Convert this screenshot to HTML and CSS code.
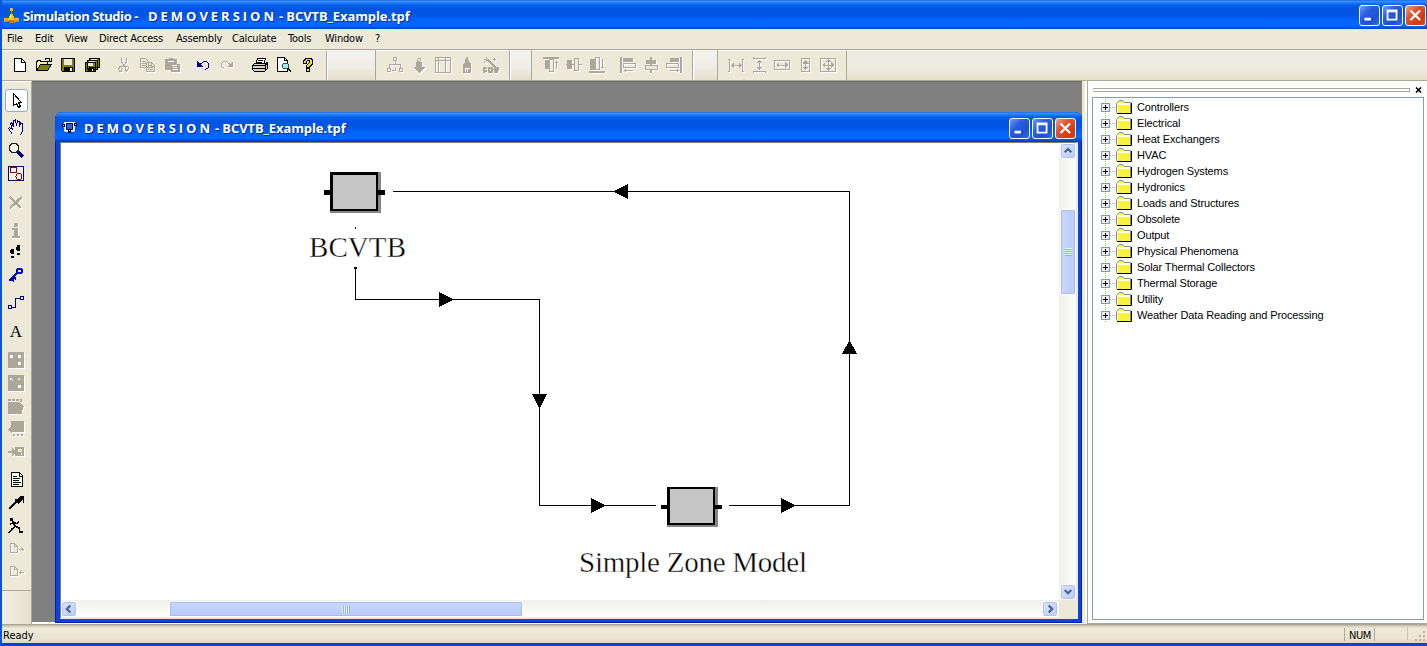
FILE: index.html
```html
<!DOCTYPE html>
<html lang="en">
<head>
<meta charset="utf-8">
<title>Simulation Studio</title>
<link rel="stylesheet" href="styles.css">
</head>
<body>
<svg class="defs" width="0" height="0">
  <defs>
    <symbol id="min" viewBox="0 0 21 21"><path d="M5 13h7v3H5z" fill="#fff"/></symbol>
    <symbol id="max" viewBox="0 0 21 21"><path d="M4 4h12v12H4zM6 7v7h8V7z" fill="#fff" fill-rule="evenodd"/></symbol>
    <symbol id="cls" viewBox="0 0 21 21"><path d="M5 5l10.500 10.500M15.500 5L5 15.500" stroke="#fff" stroke-width="2.500"/></symbol>
    <symbol id="folder" viewBox="0 0 16 14">
      <path d="M1 4h14v9H1z" fill="#f4f43c"/><path d="M2 3l1-2h4l1 2z" fill="#f4f43c"/>
      <path d="M.5 12.500v-9l2-2.500 1-.5h3l2 2h6v10" fill="none" stroke="#87877c"/>
      <path d="M1.500 12V4.500H14" fill="none" stroke="#fffff0"/>
      <path d="M1 13.500h14.500V3" fill="none" stroke="#000"/>
    </symbol>
    <symbol id="plus" viewBox="0 0 9 9"><rect x=".5" y=".5" width="8" height="8" fill="#f0eee6" stroke="#7898b5"/><path d="M2 4.500h5M4.500 2v5" stroke="#000"/></symbol>
  </defs>
</svg>
<div class="app">
  <header class="titlebar">
    <svg class="logo" width="16" height="16" viewBox="0 0 16 16"><path d="M7 2h1v4H7z" fill="#8c8a30"/><path d="M6 0h3v3H6z" fill="#ffb400"/><path d="M6 6h3v2h1v2h1v3H4v-3h1V8h1z" fill="#ffc020"/><path d="M0 10h4v4H0zM11 10h4v4h-4z" fill="#f0a000"/><path d="M5 12h6v3H5zM1 13h3v1H1zM12 13h3v1h-3z" fill="#d07800"/><path d="M6 7h1v3H6zM1 10h1v1H1zM12 10h1v1h-1z" fill="#fff060"/></svg>
    <span class="t t-app">Simulation Studio -</span><span class="t t-demo">D E M O V E R S I O N</span><span class="t t-file">- BCVTB_Example.tpf</span>
    <div class="winbtns">
      <svg class="wb"><use href="#min"/></svg><svg class="wb"><use href="#max"/></svg><svg class="wb close"><use href="#cls"/></svg>
    </div>
  </header>
  <nav class="menu"><span>File</span><span>Edit</span><span>View</span><span>Direct Access</span><span>Assembly</span><span>Calculate</span><span>Tools</span><span>Window</span><span>?</span></nav>
  <div class="toolbar">
    <div class="band b1">
      <svg class="i" viewBox="0 0 16 16"><path d="M2.500 1.500h7l4 4v9h-11z" fill="#fff" stroke="#000"/><path d="M9.500 1.500v4h4" fill="none" stroke="#000"/></svg>
      <svg class="i" viewBox="0 0 16 16"><path d="M.5 13.500v-9h1v-1h3v1h7v3" fill="#ffff80" stroke="#000"/><path d="M.5 13.500l4-6h11l-4 6z" fill="#808000" stroke="#000"/><path d="M9 2.500l1-1h3l1 2M15 1v3h-3" fill="none" stroke="#000"/></svg>
      <svg class="i" viewBox="0 0 16 16"><path d="M1.500 1.500h13v13h-12l-1-1z" fill="#808000" stroke="#000"/><path d="M4 2h8v6H4z" fill="#ece9d8"/><path d="M4 10h9v4H4z" fill="#000"/><path d="M10 11h2v3h-2z" fill="#ece9d8"/></svg>
      <svg class="i" viewBox="0 0 16 16"><path d="M5.500 1.500h10v9h-10zM3.500 3.500h10v9h-10zM1.500 5.500h10v9h-10z" fill="#808000" stroke="#000"/><path d="M4 6h5v3H4zM7 2h6v1H7zM5 4h6v1H5z" fill="#ece9d8"/><path d="M4 11h6v3H4z"/><path d="M8 12h1v2H8z" fill="#fff"/></svg>
      <svg class="i dis g8" viewBox="0 0 16 16"><path d="M5.500 1v4l4 5M10.500 1v4l-4 5" fill="none" stroke="#aca899"/><path d="M5 9.500c-3 0-2.500 5-.5 5s2-5 .5-5zM11 9.500c-2 0-2.500 5-.5 4.500s2.500-4.500.5-4.500z" fill="none" stroke="#aca899"/></svg>
      <svg class="i dis" viewBox="0 0 16 16"><path d="M.5 1.500h5l3 3v6h-8zM6.500 5.500h5l3 3v6h-8z" fill="#ece9d8" stroke="#aca899"/><path d="M2 4.500h4M2 6.500h4M2 8.500h4M8 8.500h3M8 10.500h5M8 12.500h5M11.500 5v4h3" fill="none" stroke="#aca899"/></svg>
      <svg class="i dis" viewBox="0 0 16 16"><path d="M1 2h4V1h4v1h4v5h3v8H7v-2H1z" fill="#aca899"/><path d="M4 4h6v1H4zM8 8h5v1H8zM9 10h4v1H9zM9 12h5v1H9z" fill="#fff"/></svg>
      <svg class="i g7" viewBox="0 0 16 16"><path d="M2 10h6L2 4z" fill="#000080"/><path d="M5 7.500l3.500-3h3l2 2v4l-3 2" fill="none" stroke="#000080"/></svg>
      <svg class="i dis" viewBox="0 0 16 16"><path d="M14 10H8l6-6z" fill="#aca899"/><path d="M11 7.500l-3.500-3h-3l-2 2v3l3 2" fill="none" stroke="#aca899"/></svg>
      <svg class="i g9" viewBox="0 0 16 16"><path d="M3.500 7.500l2-6h8l-2 6z" fill="#fff" stroke="#000"/><path d="M.5 8.500l2-2h11l2-1v6l-3 3h-10l-2-2z" fill="#d8d5c5" stroke="#000"/><path d="M1 8.500h12v5M13 8.500l2-2M1 11.500h12M6 3.500h5M5 5.500h5" fill="none" stroke="#000"/><path d="M8 10h2v1H8z" fill="#ee0"/></svg>
      <svg class="i" viewBox="0 0 16 16"><path d="M1.500.5h7l3 3v11h-10z" fill="#fff" stroke="#000"/><path d="M8.500.5v3h3" fill="none" stroke="#000"/><circle cx="9.500" cy="9" r="3" fill="#9ee" stroke="#444"/><path d="M12 11.500l3 3" stroke="#000" stroke-width="2"/></svg>
      <svg class="i" viewBox="0 0 16 16"><path d="M3 3l2-2h6l2 2v4l-3 3v1H6V8l3-2V4H7v3H3zM6 11h4v4H6z" fill="#000"/><path d="M4 4l2-2h4l2 2v2L9 9v1H7V8l3-2V4L9 3H7L6 4v2H4zM7 12h2v2H7z" fill="#f4e900"/></svg>
    </div>
    <div class="gap w48"></div>
    <div class="band b2">
      <svg class="i dis" viewBox="0 0 16 16"><g fill="none" stroke="#aca899"><path d="M6.500.5h3v3h-3zM.5 11.500h3v3h-3zM12.500 11.500h3v3h-3zM8 4v4M2.500 11V7.500h11V11M5 13.500h3v-3"/></g></svg>
      <svg class="i dis" viewBox="0 0 16 16"><path d="M5 5h6v5h3l-6 6-6-6h3z" fill="#aca899"/><circle cx="8" cy="3" r="1.500" fill="none" stroke="#aca899"/></svg>
      <svg class="i dis" viewBox="0 0 16 16"><path d="M.5.500h15v15H.5zM1 3.500h15M3.500 1v15M10.500 1v15" fill="none" stroke="#aca899"/></svg>
      <svg class="i dis" viewBox="0 0 16 16"><path d="M7 0h2l1 5 2 2v9H4V7l2-2z" fill="#aca899"/><path d="M6 11h5v1H6zM6 12h1v3H6zM8 12h1v3H8z" fill="#fff"/></svg>
      <svg class="i dis" viewBox="0 0 16 16"><path d="M3.500 0v5M1 2.500h5M11.500 1v3M10 2.500h3M5 3l8 8M1.500 4v2" stroke="#aca899" stroke-width="1.500"/><path d="M1 16v-5h3M1 13.500h3M6 11h3v4H6zM12 16v-5h3v2h-3l3 3" fill="none" stroke="#aca899" stroke-width="2"/></svg>
    </div>
    <div class="gap w22"></div>
    <div class="band b3">
      <svg class="i dis" viewBox="0 0 16 16"><path d="M0 0h16v2H0zM2 3h4v9H2z" fill="#aca899"/><path d="M6.500 2.500h4v12h-4zM13.500 4v8M12 5.500h3" fill="none" stroke="#aca899"/></svg>
      <svg class="i dis" viewBox="0 0 16 16"><path d="M1 3h5v9H1zM0 7h16v1H0z" fill="#aca899"/><path d="M8.500 1.500h4v12h-4z" fill="#ece9d8" stroke="#aca899"/></svg>
      <svg class="i dis" viewBox="0 0 16 16"><path d="M0 14h16v2H0zM1 2h5v11H1z" fill="#aca899"/><path d="M6.500.5h4v12h-4zM13.500 2v9M12 10.500h3" fill="none" stroke="#aca899"/></svg>
      <svg class="i dis g8" viewBox="0 0 16 16"><path d="M0 0h2v16H0zM3 1h10v4H3z" fill="#aca899"/><path d="M3.500 6.500h12v4h-12zM4 13.500h9M5.500 12v3" fill="none" stroke="#aca899"/></svg>
      <svg class="i dis" viewBox="0 0 16 16"><path d="M7 0h2v16H7zM3 3h10v4H3z" fill="#aca899"/><path d="M2.500 8.500h12v4h-12z" fill="#ece9d8" stroke="#aca899"/></svg>
      <svg class="i dis" viewBox="0 0 16 16"><path d="M14 0h2v16h-2zM4 1h9v4H4z" fill="#aca899"/><path d="M.5 6.500h12v4H.5zM4 13.500h9M11.500 12v3" fill="none" stroke="#aca899"/></svg>
    </div>
    <div class="gap w25"></div>
    <div class="band b4">
      <svg class="i dis" viewBox="0 0 16 16"><path d="M4 8.500h9" stroke="#aca899"/><path d="M3 8.500l3-3v6zM14 8.500l-3-3v6z" fill="#aca899"/><path d="M0 2.500h1.500v12H0M16 2.500h-1.500v12H16" fill="none" stroke="#aca899"/></svg>
      <svg class="i dis" viewBox="0 0 16 16"><path d="M8.500 4v8" stroke="#aca899"/><path d="M8.500 3l3 3h-6zM8.500 13l3-3h-6z" fill="#aca899"/><path d="M2.500 0v1.500h12V0M2.500 16v-1.500h12V16" fill="none" stroke="#aca899"/></svg>
      <svg class="i dis" viewBox="0 0 16 16"><path d="M.5 3.500h15v9H.5zM4 8h8" fill="none" stroke="#aca899"/><path d="M2 8l3-3v6zM14 8l-3-3v6z" fill="#aca899"/></svg>
      <svg class="i dis" viewBox="0 0 16 16"><path d="M4.500 1.500h8v13h-8zM8.500 4v8" fill="none" stroke="#aca899"/><path d="M8.500 2.500l3 4h-6zM8.500 13.500l3-4h-6z" fill="#aca899"/></svg>
      <svg class="i dis" viewBox="0 0 16 16"><path d="M.5 1.500h15v13H.5zM4 8h8M8 4v8" fill="none" stroke="#aca899"/><path d="M2 8l3-3v6zM14 8l-3-3v6zM8 2l3 3H5zM8 14l3-3H5z" fill="#aca899"/></svg>
    </div>
  </div>
  <div class="main">
    <aside class="tools">
      <div class="tb sel"><svg class="i" viewBox="0 0 16 16"><path d="M4.500.5v12l3-2 2 4 2-1-2-4h3z" fill="#fff" stroke="#000"/></svg></div>
      <svg class="i" viewBox="0 0 16 16"><path d="M4.500 15.500l-4-6 1-1 3 2-2-6 1-1 2 4V2l2-1 1 6 1-5 2 1v5l1-4 2 1v7l-2 4" fill="#f4f1e4" stroke="#000080"/></svg>
      <svg class="i" viewBox="0 0 16 16"><circle cx="6" cy="6" r="4.800" fill="#f4f1e4" stroke="#222"/><path d="M10 10l5 5" stroke="#000080" stroke-width="3"/></svg>
      <svg class="i" viewBox="0 0 16 16"><path d="M.5 1.500h15v14H.5z" fill="#f4f1ea" stroke="#000080"/><path d="M2.500 2.500h6v5h-6z" fill="none" stroke="#900000"/><circle cx="11" cy="11.500" r="3" fill="none" stroke="#900000"/></svg>
      <svg class="i dis s6" viewBox="0 0 16 16"><path d="M2 3l11 11M14 3L2 14" stroke="#aca899" stroke-width="2.500"/></svg>
      <svg class="i dis s6" viewBox="0 0 16 16"><path d="M6 0h4v4H6zM4 5h6v8h2v2H4v-2h2V7H4z" fill="#aca899"/></svg>
      <svg class="i nm" viewBox="0 0 16 16"><path d="M3 5h3v5H3zM2 6h4v3H2zM3 12h3v2H3zM9 1h3v6H9zM8 3h4v3H8zM9 9h3v2H9z" fill="#000"/></svg>
      <svg class="i" viewBox="0 0 16 16"><circle cx="11.500" cy="4" r="2.500" fill="#dce6ff" stroke="#0000d0" stroke-width="2"/><path d="M9 6l-8 8M3 12l3 2M5 10l3 2" stroke="#0000d0" stroke-width="2"/></svg>
      <svg class="i s5" viewBox="0 0 16 16"><path d="M.5 10.500h3v3h-3zM12.500 1.500h3v3h-3zM4 12.500h3.500v-9H12" fill="none" stroke="#000080"/></svg>
      <svg class="i s6" viewBox="0 0 16 16"><text x="8" y="13" class="glyph" text-anchor="middle">A</text></svg>
      <svg class="i dis s5" viewBox="0 0 16 16"><path d="M0 0h16v16H0z" fill="#aca899"/><path d="M2 3h3v3H2zM10 3h3v3h-3zM10 10h3v3h-3z" fill="#fff"/></svg>
      <svg class="i dis" viewBox="0 0 16 16"><path d="M0 0h16v16H0z" fill="#aca899"/><path d="M2 3h2v2H2zM4 5h1v1H4zM11 3h1v2h-2V4zM10 10h3v3h-3z" fill="#fff"/></svg>
      <svg class="i dis" viewBox="0 0 16 16"><path d="M0 1h3v2H0zM4 1h3v2H4zM8 1h3v2H8zM12 1h2v3h-2zM0 4h12v1l4 3-2 6v2H0z" fill="#aca899"/></svg>
      <svg class="i dis" viewBox="0 0 16 16"><path d="M3 0h13v11H4v2L0 8l3-2zM5 13h2v2H5zM9 13h2v2H9zM13 13h2v2h-2z" fill="#aca899"/></svg>
      <svg class="i dis" viewBox="0 0 16 16"><path d="M0 7h4V4l4 4-4 4V9H0zM7 3h9v9H7z" fill="#aca899"/><path d="M10 5h4v3h-4zM13 9h1v2h-1z" fill="#ece9d8"/></svg>
      <svg class="i s5" viewBox="0 0 16 16"><path d="M3.500.5h8l3 3v11h-11z" fill="#fffdf0" stroke="#000"/><path d="M5 4.500h4M5 6.500h7M5 8.500h6M5 10.500h8M5 12.500h6M11.500 1v3h3" fill="none" stroke="#000"/></svg>
      <svg class="i" viewBox="0 0 16 16"><path d="M1 14l8-8" stroke="#000" stroke-width="2"/><path d="M7 4h2l3-3h4v7h-1V4l-3 4-2 1-3-3z"/><path d="M0 14h2v1H0z" fill="#f0e000"/></svg>
      <svg class="i" viewBox="0 0 16 16"><path d="M2 0h3v3H2z"/><path d="M4.500 3l3 6M2 6.500l3-2 4 1 2-2M7 8l4 2 1 4h3M7 9l-3 2-3 4" fill="none" stroke="#000" stroke-width="1.500"/></svg>
      <svg class="i dis" viewBox="0 0 16 16"><path d="M2.500 2.500h4l3 3v6h-7zM6.500 2.500v3h3M11 8.500h4.500M13.500 6.500l2 2-2 2" fill="none" stroke="#aca899"/></svg>
      <svg class="i dis" viewBox="0 0 16 16"><path d="M2.500 2.500h4l3 3v6h-7zM6.500 2.500v3h3M11 8.500h4.500M13.500 6.500l-2 2 2 2" fill="none" stroke="#aca899"/></svg>
      <div class="tail"></div>
    </aside>
    <section class="workspace">
      <div class="mdi">
        <header class="mdi-title">
          <svg class="mdi-icon" width="17" height="12" viewBox="0 0 17 12"><path d="M5 1h7v7H5zM2 3.500h3M12 2.500h3" fill="none" stroke="#fff" stroke-width="3.500"/><path d="M5.500 1.500h6v6h-6z" fill="#2068e0" stroke="#000"/><path d="M1 2h3v3H1zM13 1h3v3h-3zM7 7h3v4H7z"/><path d="M2 3h1v1H2zM14 2h1v1h-1zM8 8h1v1H8z" fill="#fff"/></svg>
          <span class="t t-demo">D E M O V E R S I O N</span><span class="t t-file">- BCVTB_Example.tpf</span>
          <div class="winbtns"><svg class="wb"><use href="#min"/></svg><svg class="wb"><use href="#max"/></svg><svg class="wb close"><use href="#cls"/></svg></div>
        </header>
        <div class="client">
          <svg class="canvas" viewBox="61 143 998 457" width="998" height="457">
            <g fill="none" stroke="#000"><path d="M393 191.500H849.500V505.500H729M355.500 268V299.500H539.500V505.500H656M355.500 227v2"/></g>
            <path d="M354 267h3v2h-3z"/>
            <path d="M613 191.500l15-7.500v15zM454 299.500l-15-7.500v15zM539.500 409l-7.500-15h15zM606 505.500l-15-7.500v15zM796 505.500l-15-7.500v15zM849.500 340l-7.500 14h15z"/>
            <path d="M330 172h51v41h-51zM667 487h51v40h-51z" fill="#868686"/>
            <path d="M330 172h48v39h-48zM324 190h6v5h-6zM378 190h7v5h-7zM667 487h48v38h-48zM661 505h6v4h-6zM715 505h7v4h-7z"/>
            <path d="M333 175h43v34h-43zM670 489h43v34h-43z" fill="#c6c6c6"/>
            <text class="label" x="309" y="257" textLength="97">BCVTB</text>
            <text class="label" x="579" y="572" textLength="228">Simple Zone Model</text>
          </svg>
          <div class="vscroll">
            <svg class="sb" viewBox="0 0 16 17"><path d="M4 10l4-4 4 4" /></svg>
            <div class="vthumb"></div>
            <svg class="sb" viewBox="0 0 16 17"><path d="M4 6l4 4 4-4"/></svg>
          </div>
          <div class="hscroll">
            <svg class="sb" viewBox="0 0 16 16"><path d="M9.500 4l-4 4 4 4"/></svg>
            <div class="hthumb"></div>
            <svg class="sb" viewBox="0 0 16 16"><path d="M6.500 4l4 4-4 4"/></svg>
          </div>
          <div class="corner"></div>
        </div>
      </div>
    </section>
    <aside class="panel">
      <div class="grip"><div class="lines"></div><svg width="7" height="6" viewBox="0 0 7 6"><path d="M1 .5l5 5M6 .5l-5 5" stroke="#000" stroke-width="1.600"/></svg></div>
      <ul class="tree">
        <li><svg class="plus"><use href="#plus"/></svg><svg class="fold"><use href="#folder"/></svg><span>Controllers</span></li>
        <li><svg class="plus"><use href="#plus"/></svg><svg class="fold"><use href="#folder"/></svg><span>Electrical</span></li>
        <li><svg class="plus"><use href="#plus"/></svg><svg class="fold"><use href="#folder"/></svg><span>Heat Exchangers</span></li>
        <li><svg class="plus"><use href="#plus"/></svg><svg class="fold"><use href="#folder"/></svg><span>HVAC</span></li>
        <li><svg class="plus"><use href="#plus"/></svg><svg class="fold"><use href="#folder"/></svg><span>Hydrogen Systems</span></li>
        <li><svg class="plus"><use href="#plus"/></svg><svg class="fold"><use href="#folder"/></svg><span>Hydronics</span></li>
        <li><svg class="plus"><use href="#plus"/></svg><svg class="fold"><use href="#folder"/></svg><span>Loads and Structures</span></li>
        <li><svg class="plus"><use href="#plus"/></svg><svg class="fold"><use href="#folder"/></svg><span>Obsolete</span></li>
        <li><svg class="plus"><use href="#plus"/></svg><svg class="fold"><use href="#folder"/></svg><span>Output</span></li>
        <li><svg class="plus"><use href="#plus"/></svg><svg class="fold"><use href="#folder"/></svg><span>Physical Phenomena</span></li>
        <li><svg class="plus"><use href="#plus"/></svg><svg class="fold"><use href="#folder"/></svg><span>Solar Thermal Collectors</span></li>
        <li><svg class="plus"><use href="#plus"/></svg><svg class="fold"><use href="#folder"/></svg><span>Thermal Storage</span></li>
        <li><svg class="plus"><use href="#plus"/></svg><svg class="fold"><use href="#folder"/></svg><span>Utility</span></li>
        <li><svg class="plus"><use href="#plus"/></svg><svg class="fold"><use href="#folder"/></svg><span>Weather Data Reading and Processing</span></li>
      </ul>
    </aside>
  </div>
  <footer class="status"><span class="ready">Ready</span><span class="num">NUM</span><span class="cell"></span>
    <svg class="resize" width="12" height="12" viewBox="0 0 12 12"><path d="M9 1h2v2H9zM5 5h2v2H5zM9 5h2v2H9zM1 9h2v2H1zM5 9h2v2H5zM9 9h2v2H9z" fill="#b8b4a3"/></svg>
  </footer>
</div>
</body>
</html>
```
FILE: styles.css
```css
* { box-sizing: border-box; }
body { margin: 0; background: #ece9d8; font: 11px/16px "DejaVu Sans Condensed", "DejaVu Sans", sans-serif; color: #000; }
svg { display: block; flex: none; }
.defs { position: absolute; }
.app { width: 1427px; height: 646px; display: flex; flex-direction: column; overflow: hidden; border-left: 2px solid #0855dd; border-bottom: 3px solid #0a3fd8; }

.titlebar, .mdi-title { display: flex; align-items: center; background: linear-gradient(#0b57d8 0, #3a95ff 1px, #2a86fb 2px, #0560ea 5px, #0054e3 9px, #0055e5 15px, #0266ff 22px, #0267ff 26px, #0050dc 28px, #0038b8); }
.titlebar { height: 29px; margin-left: -2px; padding: 2px 1px 0 4px; flex: none; }
.t { font: bold 13px/20px "Open Sans", sans-serif; color: #fff; text-shadow: 1px 1px 0 #0f2c8c; white-space: pre; flex: none; }
.t-app { width: 125px; margin-left: 3px; letter-spacing: -.42px; }
.t-demo { width: 131px; letter-spacing: -.2px; }
.t-file { letter-spacing: -.1px; }
.winbtns { display: flex; gap: 2px; margin-left: auto; }
.wb { width: 21px; height: 21px; border: 1px solid #fff; border-radius: 3px; background: linear-gradient(135deg, #6f9bf5, #2b5fe0 35%, #1f50d0 70%, #2f6df0); }
.wb.close { background: linear-gradient(135deg, #f0a08a, #e0552f 35%, #cf3c12 75%, #d9481c); }

.menu { height: 20px; flex: none; padding-left: 5px; padding-top: 2px; display: grid; grid-template-columns: 28px 30px 34px 77px 56px 56px 37px 50px 20px; letter-spacing: -.2px; white-space: nowrap; }
.toolbar { height: 32px; flex: none; display: flex; border-top: 1px solid #aca899; border-bottom: 1px solid #aca899; background: linear-gradient(#fff 0, #eeede3 1px, #eceadb 70%, #e3e0ca); }
.band { display: flex; align-items: center; gap: 8px; padding-bottom: 2px; background: #ece9d8; border-right: 1px solid #aca899; border-top: 1px solid #fff; }
.gap { background: linear-gradient(#f3f3ef, #efeee6 60%, #e2dfca); border-left: 1px solid #fff; border-right: 1px solid #aca899; }
.b1 { width: 325px; padding-left: 10px; }
.w48 { width: 49px; }
.b2 { width: 134px; padding-left: 11px; }
.w22 { width: 22px; }
.b3 { width: 161px; padding-left: 11px; gap: 7px; }
.w25 { width: 25px; }
.b4 { width: 129px; padding-left: 10px; gap: 7px; }
.i { width: 16px; height: 16px; shape-rendering: crispEdges; overflow: visible; }
.dis { filter: drop-shadow(1px 1px 0 #fff); }
.g7 { margin-left: 7px; }
.g8 { margin-left: 8px; }
.g9 { margin-left: 9px; }

.main { display: flex; height: 543px; flex: none; }
.tools { width: 30px; display: flex; flex-direction: column; align-items: center; gap: 7px; background: #ece9d8; border-right: 1px solid #aca899; border-top: 1px solid #fff; padding-top: 7px; padding-right: 1px; }
.tb.sel { width: 23px; height: 23px; padding: 3px; background: #fff; border: 1px solid #8fadc6; border-radius: 3px; }
.s5 { margin-top: 5px; }
.s6 { margin-top: 6px; }
.nm { margin-top: -2px; }
.glyph { font: 17px "Liberation Serif", serif; }
.tail { width: 29px; flex: 1; margin-top: 3px; border-top: 1px solid #aca899; background: linear-gradient(90deg, #f1efe6, #e4e1cd); }
.workspace { width: 1050px; padding: 30px 0 0 23px; background: #808080; border-top: 1px solid #6e6e68; border-bottom: 2px solid #fff; }
.mdi { width: 1027px; height: 511px; border-radius: 7px 7px 0 0; background: #0a43e0; padding: 0 4px 4px 5px; box-shadow: inset 1px -1px 0 #0420a0, inset -1px 0 0 #0420a0; }
.mdi-title { height: 30px; margin: 0 -4px 0 -5px; padding: 2px 6px 0 6px; border-radius: 7px 7px 0 0; }
.mdi-title .t-demo { margin-left: 6px; }
.client { height: 477px; display: grid; grid-template-columns: 998px 17px; grid-template-rows: 457px 17px; border: 1px solid #807d6c; border-right: 2px solid #ece9d8; border-bottom: 2px solid #ece9d8; background: #fff; }
.canvas { shape-rendering: crispEdges; }
.label { font: 29px "Liberation Serif", serif; stroke: #fff; stroke-width: .35px; }
.vscroll { background: linear-gradient(90deg, #f0f0ea, #fefefb); display: flex; flex-direction: column; padding-left: 1px; }
.hscroll { background: linear-gradient(#f0f0ea, #fefefb); display: flex; padding-top: 1px; }
.corner { background: #ece9d8; }
.sb { width: 16px; height: 16px; border: 1px solid #fff; border-radius: 3px; background: linear-gradient(135deg, #dae4fe, #b9cbfa); box-shadow: inset 0 0 0 1px #aec2f2; fill: none; stroke: #4d6185; stroke-width: 2.500px; }
.vthumb, .hthumb { border: 1px solid #fff; border-radius: 2px; box-shadow: inset 0 0 0 1px #a4bcf0; }
.vthumb { height: 86px; width: 16px; margin: 50px 0 289px; background: repeating-linear-gradient(#eef4fe 0 1px, #8cb0f8 1px 2px) center / 7px 8px no-repeat, linear-gradient(90deg, #c9d7fd, #b9cbfb); }
.hthumb { width: 354px; height: 16px; margin: 0 519px 0 92px; background: repeating-linear-gradient(90deg, #eef4fe 0 1px, #8cb0f8 1px 2px) center / 8px 7px no-repeat, linear-gradient(#c9d7fd, #b9cbfb); }

.panel { flex: 1; margin-left: 5px; background: #fff; border-left: 1px solid #aca899; border-bottom: 1px solid #aca899; padding: 7px 3px 0 4px; box-shadow: -2px 0 0 #fff; }
.grip { display: flex; height: 9px; gap: 5px; padding-left: 1px; }
.grip svg { margin-top: -1px; }
.lines { width: 317px; height: 4px; border: solid #aca899; border-width: 1px 1px 1px 0; }
.tree { list-style: none; margin: 0; padding: 1px 0 0 8px; height: 523px; border: 1px solid #7f9db9; font: 11px/16px "Liberation Sans", sans-serif; letter-spacing: -.12px; }
.tree li { display: flex; height: 16px; align-items: center; background: repeating-linear-gradient(#aca899 0 1px, #fff 1px 2px) 4px 0 / 1px 16px no-repeat, repeating-linear-gradient(90deg, #aca899 0 1px, #fff 1px 2px) 9px 8px / 6px 1px no-repeat; }
.plus { width: 9px; height: 9px; }
.fold { width: 16px; height: 14px; margin: 0 5px 0 6px; }
.tree span { white-space: nowrap; }

.status { height: 19px; flex: none; display: flex; align-items: center; padding-left: 1px; background: linear-gradient(#9d9a8b 0, #cfccba 2px, #ece9d8 4px, #e8e5d3 15px, #d9d6c2); }
.ready { flex: 1; padding-top: 4px; }
.num { width: 31px; height: 13px; margin-top: 2px; padding-left: 4px; line-height: 15px; border-left: 1px solid #aca899; border-right: 1px solid #aca899; letter-spacing: -.4px; }
.cell { width: 33px; height: 13px; border-right: 1px solid #c8c5b2; }
.resize { margin: 4px 1px 0 6px; }
```
